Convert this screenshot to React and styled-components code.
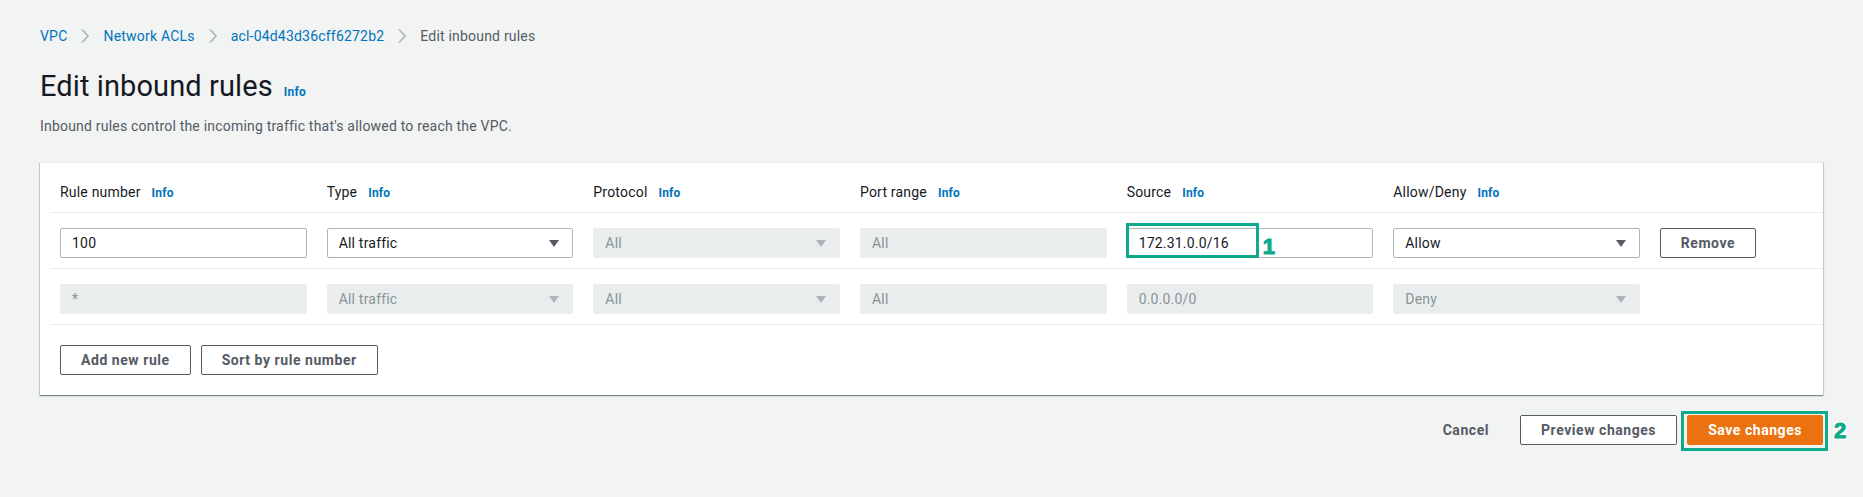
import React from "react";
import styled, { createGlobalStyle } from "styled-components";

const GlobalStyle = createGlobalStyle`
  body {
    margin: 0;
    background: #f2f3f3;
    font-family: Roboto, "Liberation Sans", sans-serif;
    letter-spacing: 0.2px;
    color: #16191f;
  }
`;

const columns = ["Rule number", "Type", "Protocol", "Port range", "Source", "Allow/Deny"];

const Page = styled.div`
  padding: 26px 40px 40px;
`;

const Crumbs = styled.nav`
  display: flex;
  align-items: center;
  gap: 13px;
  height: 20px;
  font-size: 14px;
`;

const Crumb = styled.span`
  color: ${(p) => (p.$current ? "#545b64" : "#0073bb")};
`;

const TitleRow = styled.div`
  display: flex;
  align-items: baseline;
  gap: 11px;
  margin-top: 22px;
`;

const Title = styled.h1`
  margin: 0;
  font-size: 29px;
  line-height: 36px;
  font-weight: 400;
  letter-spacing: 0.1px;
  color: #16191f;
`;

const Info = styled.a`
  font-size: 12px;
  font-weight: 700;
  color: #0073bb;
  text-decoration: none;
`;

const Description = styled.p`
  margin: 12px 0 0;
  font-size: 14px;
  line-height: 20px;
  color: #545b64;
`;

const Panel = styled.section`
  margin-top: 26px;
  padding-left: 10px;
  background: #fff;
  border-top: 1px solid #eaeded;
  box-shadow: 0 1px 1px 0 rgba(0, 28, 36, 0.3), 1px 1px 1px 0 rgba(0, 28, 36, 0.15),
    -1px 1px 1px 0 rgba(0, 28, 36, 0.15);
`;

const Grid = styled.div`
  display: grid;
  grid-template-columns: repeat(6, 246.67px) 96px;
  column-gap: 20px;
  align-items: center;
  padding-left: 10px;
  border-bottom: 1px solid #eaeded;
`;

const HeaderRow = styled(Grid)`
  padding-top: 19px;
  padding-bottom: 9px;
`;

const RuleRow = styled(Grid)`
  padding-top: 15px;
  padding-bottom: 10px;
`;

const Label = styled.div`
  display: flex;
  align-items: baseline;
  gap: 11px;
  font-size: 14px;
  line-height: 20px;
`;

const Cell = styled.div`
  position: relative;
`;

const TextField = styled.input`
  box-sizing: border-box;
  width: 100%;
  height: 30px;
  padding: 0 11px;
  border: 1px solid ${(p) => (p.$off ? "#eaeded" : "#aab7b8")};
  border-radius: 2px;
  background: ${(p) => (p.$off ? "#eaeded" : "#fff")};
  color: ${(p) => (p.$off ? "#879596" : "#16191f")};
  font: 14px Roboto, "Liberation Sans", sans-serif;
  letter-spacing: 0.2px;
  outline: none;
`;

const SelectBox = styled.div`
  box-sizing: border-box;
  height: 30px;
  display: flex;
  align-items: center;
  justify-content: space-between;
  padding: 0 13px 0 11px;
  border: 1px solid ${(p) => (p.$off ? "#eaeded" : "#aab7b8")};
  border-radius: 2px;
  background: ${(p) => (p.$off ? "#eaeded" : "#fff")};
  color: ${(p) => (p.$off ? "#879596" : "#16191f")};
  font-size: 14px;
`;

const ButtonRow = styled.div`
  display: flex;
  gap: 10px;
  padding: 20px 10px;
`;

const Button = styled.button`
  box-sizing: border-box;
  height: 30px;
  padding: 0 20px;
  border: 1px solid
    ${(p) => (p.$variant === "primary" ? "#ec7211" : p.$variant === "link" ? "transparent" : "#545b64")};
  border-radius: 2px;
  background: ${(p) => (p.$variant === "primary" ? "#ec7211" : p.$variant === "link" ? "transparent" : "#fff")};
  color: ${(p) => (p.$variant === "primary" ? "#fff" : "#545b64")};
  font: 700 14px Roboto, "Liberation Sans", sans-serif;
  letter-spacing: 0.55px;
  white-space: nowrap;
  cursor: pointer;
`;

const WideButton = styled(Button)`
  width: 100%;
  padding: 0;
`;

const Footer = styled.div`
  display: flex;
  justify-content: flex-end;
  align-items: center;
  gap: 10px;
  margin-top: 20px;
`;

const Anchor = styled.span`
  position: relative;
  display: inline-flex;
`;

const Mark = styled.span`
  position: absolute;
  inset: ${(p) => p.$inset};
  width: ${(p) => p.$width || "auto"};
  border: 3px solid #0fa98b;
  pointer-events: none;
`;

const Step = styled.span`
  position: absolute;
  left: ${(p) => p.$left};
  top: ${(p) => p.$top};
  font: 700 22px/22px "Liberation Sans", Arial, sans-serif;
  color: #0fa98b;
  -webkit-text-stroke: 1px #0fa98b;
  text-shadow: 2px 0 #fff, -2px 0 #fff, 0 2px #fff, 0 -2px #fff, 2px 2px #fff, -2px -2px #fff,
    2px -2px #fff, -2px 2px #fff;
  pointer-events: none;
`;

function Chevron() {
  return (
    <svg width="10" height="16" viewBox="0 0 10 16">
      <path d="M2 1.5 L8 8 L2 14.5" fill="none" stroke="#aab7b8" strokeWidth="1.6" />
    </svg>
  );
}

function Caret({ off }) {
  return (
    <svg width="10" height="7" viewBox="0 0 10 7">
      <path d="M0 0 H10 L5 7 Z" fill={off ? "#aab7b8" : "#545b64"} />
    </svg>
  );
}

function Select({ value, off }) {
  return (
    <SelectBox $off={off}>
      <span>{value}</span>
      <Caret off={off} />
    </SelectBox>
  );
}

export default function App() {
  return (
    <>
      <GlobalStyle />
      <Page>
        <Crumbs>
          <Crumb>VPC</Crumb>
          <Chevron />
          <Crumb>Network ACLs</Crumb>
          <Chevron />
          <Crumb>acl-04d43d36cff6272b2</Crumb>
          <Chevron />
          <Crumb $current>Edit inbound rules</Crumb>
        </Crumbs>

        <TitleRow>
          <Title>Edit inbound rules</Title>
          <Info>Info</Info>
        </TitleRow>
        <Description>Inbound rules control the incoming traffic that's allowed to reach the VPC.</Description>

        <Panel>
          <HeaderRow>
            {columns.map((c) => (
              <Label key={c}>
                {c}
                <Info>Info</Info>
              </Label>
            ))}
          </HeaderRow>

          <RuleRow>
            <TextField readOnly value="100" />
            <Select value="All traffic" />
            <Select value="All" off />
            <TextField readOnly value="All" $off />
            <Cell>
              <TextField readOnly value="172.31.0.0/16" />
              <Mark $inset="-5px auto 0 -1px" $width="127px" />
              <Step $left="136px" $top="8px">1</Step>
            </Cell>
            <Select value="Allow" />
            <WideButton>Remove</WideButton>
          </RuleRow>

          <RuleRow>
            <TextField readOnly value="*" $off />
            <Select value="All traffic" off />
            <Select value="All" off />
            <TextField readOnly value="All" $off />
            <TextField readOnly value="0.0.0.0/0" $off />
            <Select value="Deny" off />
          </RuleRow>

          <ButtonRow>
            <Button>Add new rule</Button>
            <Button>Sort by rule number</Button>
          </ButtonRow>
        </Panel>

        <Footer>
          <Button $variant="link">Cancel</Button>
          <Button>Preview changes</Button>
          <Anchor>
            <Button $variant="primary">Save changes</Button>
            <Mark $inset="-4px -5px -6px -6px" />
            <Step $left="calc(100% + 11px)" $top="5px">2</Step>
          </Anchor>
        </Footer>
      </Page>
    </>
  );
}
